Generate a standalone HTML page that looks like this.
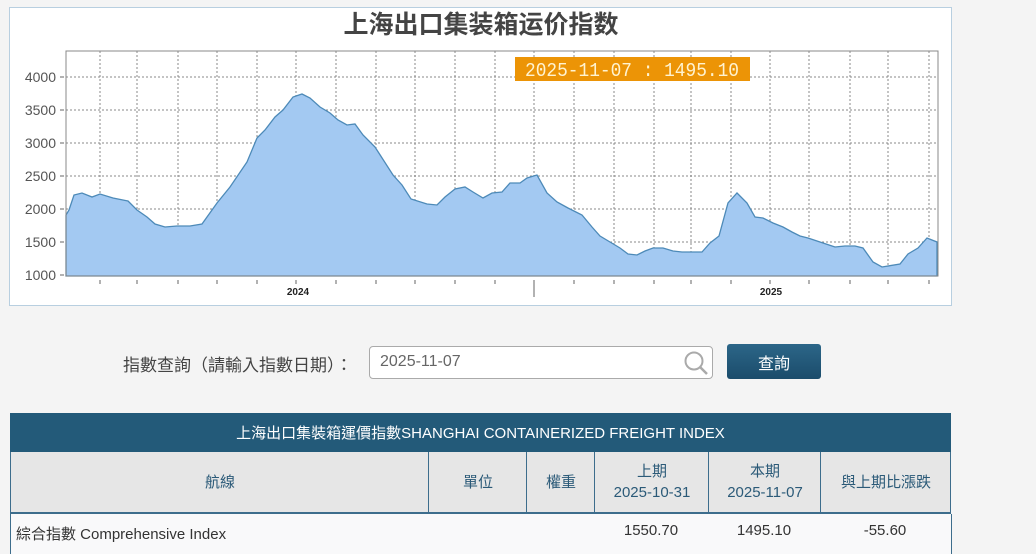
<!DOCTYPE html>
<html><head><meta charset="utf-8">
<style>
body{margin:0;width:1036px;height:551px;overflow:hidden;background:#f4f4f4;font-family:"Liberation Sans","Noto Sans CJK TC",sans-serif;position:relative}
.abs{position:absolute}
.chart{left:9px;top:7px;width:941px;height:297px;border:1px solid #b8cfe0;background:#fff}
.th{position:absolute;top:452px;height:60px;border-left:1px solid #3d6d8c;color:#2b5a78;font-size:15px;display:flex;align-items:center;justify-content:center;text-align:center;line-height:21px}
</style></head><body>
<div class="abs chart"></div>
<svg class="abs" style="left:0;top:0" width="1036" height="310">
<text x="481" y="33" text-anchor="middle" font-family="'Noto Sans CJK SC',sans-serif" font-weight="bold" font-size="25" fill="#444">上海出口集装箱运价指数</text>
<rect x="66" y="51" width="872" height="225" fill="#fff" stroke="#888" stroke-width="1"/>
<g stroke="#888" stroke-dasharray="2,2" stroke-width="1">
<path d="M100 51V276M137 51V276M178 51V276M217 51V276M257 51V276M296 51V276M336 51V276M376 51V276M415 51V276M455 51V276M495 51V276M534 51V276M574 51V276M614 51V276M654 51V276M691 51V276M731 51V276M770 51V276M809 51V276M850 51V276M888 51V276M929 51V276"/>
<path d="M66 77H938M66 110H938M66 143H938M66 176H938M66 209H938M66 242H938"/>
</g>
<path fill="#a3c9f2" stroke="#4d8ab8" stroke-width="1.3" d="M66 276L66 215L69 210L74 195L82 193L92 197L100 194L113 198L128 201L137 210L147 217L155 224L165 227L177 226L190 226L202 224L217 203L230 187L247 162L257 138L265 130L275 117L283 110L293 97L302 94L310 98L320 107L330 113L338 120L347 125L355 124L363 135L375 147L393 175L402 185L411 199L427 204L437 205L445 197L455 189L465 187L473 192L483 198L492 193L502 192L510 183L520 183L527 178L537 175L547 193L557 202L568 208L582 215L592 227L600 236L610 242L620 248L628 254L637 255L645 251L653 248L663 248L673 251L682 252L692 252L702 252L710 243L719 236L728 203L737 193L747 203L755 217L763 218L773 223L783 227L792 232L800 236L808 238L820 242L835 247L845 246L855 246L863 248L873 262L882 267L900 264L908 254L918 248L927 238L937 242L937 276Z"/>
<rect x="66" y="51" width="872" height="225" fill="none" stroke="#888" stroke-width="1"/>
<rect x="515" y="57" width="235" height="24" fill="#ec9406"/>
<text x="525" y="76" font-family="'Liberation Mono',monospace" font-size="19" fill="#fff3d0" textLength="214" lengthAdjust="spacingAndGlyphs">2025-11-07 : 1495.10</text>
<g font-size="14" fill="#555" text-anchor="end">
<text x="56" y="82">4000</text><text x="56" y="115">3500</text><text x="56" y="148">3000</text><text x="56" y="181">2500</text><text x="56" y="214">2000</text><text x="56" y="247">1500</text><text x="56" y="280">1000</text>
</g>
<g stroke="#666"><path d="M60 77H64M60 110H64M60 143H64M60 176H64M60 209H64M60 242H64M60 275H64"/>
<path d="M100 280V284M137 280V284M178 280V284M217 280V284M257 280V284M296 280V284M336 280V284M376 280V284M415 280V284M455 280V284M495 280V284M534 280V297M574 280V284M614 280V284M654 280V284M691 280V284M731 280V284M770 280V284M809 280V284M850 280V284M888 280V284M929 280V284"/></g>
<text x="298" y="295" font-size="10" font-weight="bold" fill="#222" text-anchor="middle">2024</text>
<text x="771" y="295" font-size="10" font-weight="bold" fill="#222" text-anchor="middle">2025</text>
</svg>
<div class="abs" style="left:123px;top:351px;font-size:17px;color:#444">指數查詢（請輸入指數日期）：</div>
<div class="abs" style="left:369px;top:346px;width:342px;height:31px;border:1px solid #aaa;border-radius:4px;background:#fff"></div>
<div class="abs" style="left:380px;top:353px;font-size:16px;color:#666">2025-11-07</div>
<svg class="abs" style="left:682px;top:349px" width="28" height="28"><circle cx="12" cy="12" r="8.5" fill="none" stroke="#aaa" stroke-width="2"/><path d="M18 18L25 25" stroke="#aaa" stroke-width="2.5"/></svg>
<div class="abs" style="left:727px;top:344px;width:94px;height:35px;border-radius:3px;background:linear-gradient(#2c6688,#1b4c6b);color:#fff;font-size:16px;display:flex;align-items:center;justify-content:center">查詢</div>
<div class="abs" style="left:10px;top:413px;width:941px;height:39px;background:#235a79;color:#fff;font-size:15px;display:flex;align-items:center;justify-content:center">上海出口集裝箱運價指數SHANGHAI CONTAINERIZED FREIGHT INDEX</div>
<div class="abs" style="left:10px;top:452px;width:940px;height:60px;background:#e6e6e6;border-right:1px solid #3d6d8c;border-bottom:2px solid #3d6d8c"></div>
<div class="th" style="left:10px;width:418px">航線</div>
<div class="th" style="left:428px;width:98px">單位</div>
<div class="th" style="left:526px;width:68px">權重</div>
<div class="th" style="left:594px;width:114px">上期<br>2025-10-31</div>
<div class="th" style="left:708px;width:112px">本期<br>2025-11-07</div>
<div class="th" style="left:820px;width:130px">與上期比漲跌</div>
<div class="abs" style="left:10px;top:514px;width:940px;height:40px;background:#f9f9fa;border-left:1px solid #3d6d8c;border-right:1px solid #3d6d8c"></div>
<div class="abs" style="left:16px;top:523px;font-size:15px;color:#333">綜合指數 Comprehensive Index</div>
<div class="abs" style="left:594px;width:114px;top:522px;font-size:15px;color:#333;text-align:center">1550.70</div>
<div class="abs" style="left:708px;width:112px;top:522px;font-size:15px;color:#333;text-align:center">1495.10</div>
<div class="abs" style="left:820px;width:130px;top:522px;font-size:15px;color:#333;text-align:center">-55.60</div>
</body></html>
